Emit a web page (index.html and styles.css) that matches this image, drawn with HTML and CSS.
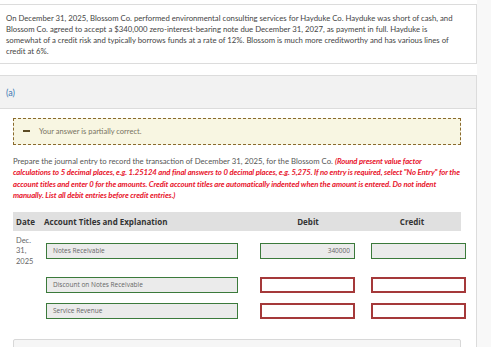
FILE: index.html
```html
<!DOCTYPE html>
<html lang="en">
<head>
  <meta charset="UTF-8" />
  <title>Blossom Co. journal entry</title>
  <link rel="stylesheet" href="styles.css">
</head>
<body>
  <div class="page">
    <div class="main">

      <!-- Problem statement -->
      <div class="card intro">
        <p>On December 31, 2025, Blossom Co. performed environmental consulting services for Hayduke Co. Hayduke was short of cash, and Blossom Co. agreed to accept a $340,000 zero-interest-bearing note due December 31, 2027, as payment in full. Hayduke is somewhat of a credit risk and typically borrows funds at a rate of 12%. Blossom is much more creditworthy and has various lines of credit at 6%.</p>
      </div>

      <!-- Part (a) -->
      <div class="card part">
        <div class="part-head">(a)</div>
        <div class="part-body">

          <div class="feedback">
            <span class="minus"></span>
            <span>Your answer is partially correct.</span>
          </div>

          <p class="instructions">Prepare the journal entry to record the transaction of December 31, 2025, for the Blossom Co. <em>(Round present value factor calculations to 5 decimal places, e.g. 1.25124 and final answers to 0 decimal places, e.g. 5,275. If no entry is required, select "No Entry" for the account titles and enter 0 for the amounts. Credit account titles are automatically indented when the amount is entered. Do not indent manually. List all debit entries before credit entries.)</em></p>

          <div class="journal">
            <div class="row head">
              <div>Date</div>
              <div>Account Titles and Explanation</div>
              <div class="center">Debit</div>
              <div class="center">Credit</div>
            </div>

            <div class="row">
              <div class="date">Dec.<br>31,<br>2025</div>
              <div><div class="field ok">Notes Receivable</div></div>
              <div><div class="field ok num">340000</div></div>
              <div><div class="field ok num"></div></div>
            </div>

            <div class="row">
              <div class="date"></div>
              <div><div class="field ok">Discount on Notes Receivable</div></div>
              <div><div class="field bad"></div></div>
              <div><div class="field bad"></div></div>
            </div>

            <div class="row">
              <div class="date"></div>
              <div><div class="field ok">Service Revenue</div></div>
              <div><div class="field bad"></div></div>
              <div><div class="field bad"></div></div>
            </div>
          </div>

          <div class="next-box"></div>
        </div>
      </div>

    </div>
    <div class="rail"></div>
  </div>
</body>
</html>
```

FILE: styles.css
```css
body {
  margin: 0;
  font-family: Lato, 'Open Sans', sans-serif;
  background: #fff;
  color: #444;
}

.page {
  display: flex;
  height: 347px;
  overflow: hidden;
}

.main {
  width: 477px;
  padding-top: 4px;
}

.rail {
  flex: 1;
  background: #f8f8f8;
}

.card {
  border: 1px solid #dcdcdc;
  border-left: 0;
  background: #fff;
}

.intro {
  padding: 8px 12px 6px 6px;
}

.intro p {
  margin: 0;
  font-size: 7.75px;
  line-height: 11px;
  color: #444;
}

.part {
  margin-top: 11px;
}

.part-head {
  background: #f2f2f2;
  border-bottom: 1px solid #dcdcdc;
  height: 32px;
  line-height: 34px;
  padding-left: 6px;
  font-size: 9px;
  color: #3a78b5;
}

.part-body {
  padding: 9px 15px 0 13px;
}

.feedback {
  display: flex;
  align-items: center;
  gap: 9px;
  height: 25px;
  padding-left: 9px;
  border: 1px dashed #8a6a2c;
  background: #f8f6e2;
  font-size: 7.5px;
  color: #77725f;
}

.minus {
  display: inline-block;
  width: 7px;
  height: 2px;
  background: #5b4b24;
  margin-top: -2px;
}

.instructions {
  margin: 11px 0 10px;
  font-size: 7.75px;
  line-height: 11.4px;
  color: #555;
}

.instructions em {
  color: #e8142c;
  font-weight: bold;
  letter-spacing: -0.1px;
}

.journal {
  width: 448px;
}

.row {
  display: grid;
  grid-template-columns: 31px 209px 110px 98px;
  align-items: center;
  padding: 5px 0;
}

.row.head {
  background: #e0e0e0;
  height: 19px;
  padding: 0;
  font-family: 'Open Sans', sans-serif;
  font-weight: bold;
  font-size: 8px;
  color: #333;
}

.row.head > div:first-child {
  padding-left: 3px;
}

.center {
  text-align: center;
}

.date {
  padding-left: 3px;
  font-size: 7.5px;
  line-height: 10.5px;
  color: #666;
}

.field {
  box-sizing: border-box;
  height: 16px;
  padding: 0 6px;
  font-family: 'Open Sans', sans-serif;
  font-size: 6.5px;
  line-height: 14px;
  color: #666;
}

.row > div:nth-child(2) .field {
  width: 192px;
  margin-left: 2px;
}

.row > div:nth-child(3) .field {
  width: 95px;
  margin-left: 7px;
}

.row > div:nth-child(4) .field {
  width: 95px;
  margin-left: 8px;
}

.field.ok {
  background: #ebebeb;
  border: 1px solid #3b7a3b;
}

.field.num {
  text-align: right;
  padding-right: 4px;
}

.field.bad {
  background: #fff;
  border: 2px solid #a5393a;
}

.next-box {
  margin-top: 15px;
  width: 446px;
  height: 30px;
  border: 1px solid #d8d8d8;
  border-radius: 2px;
  background: #f6f6f6;
}
```
